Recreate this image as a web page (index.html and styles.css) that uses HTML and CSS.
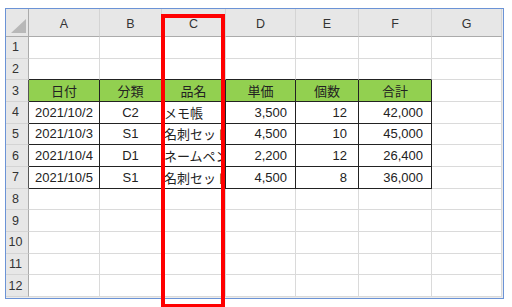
FILE: index.html
```html
<!DOCTYPE html>
<html lang="ja">
<head>
    <meta charset="UTF-8">
    <meta name="viewport" content="width=device-width, initial-scale=1.0">
    <title>売上表</title>
    <link rel="stylesheet" href="styles.css">
</head>
<body>
    <div class="page">
        <div class="sheet" id="sheet"></div>
        <div class="highlight"></div>
    </div>

    <script>
        // Column letters and cell data
        const columns = ['A', 'B', 'C', 'D', 'E', 'F', 'G'];
        const table = [
            ['日付', '分類', '品名', '単価', '個数', '合計'],
            ['2021/10/2', 'C2', 'メモ帳', '3,500', '12', '42,000'],
            ['2021/10/3', 'S1', '名刺セット', '4,500', '10', '45,000'],
            ['2021/10/4', 'D1', 'ネームペン', '2,200', '12', '26,400'],
            ['2021/10/5', 'S1', '名刺セット', '4,500', '8', '36,000']
        ];
        const align = ['center', 'center', 'left', 'num', 'num-e', 'num'];

        function cell(text, className) {
            const div = document.createElement('div');
            div.className = className;
            div.textContent = text;
            return div;
        }

        function renderSheet() {
            const sheet = document.getElementById('sheet');

            // header row
            const corner = cell('', 'col-head corner');
            corner.innerHTML = '<svg width="15" height="14" viewBox="0 0 15 14"><polygon points="0,14 15,14 15,0" fill="#b8b8b8"/></svg>';
            sheet.appendChild(corner);
            columns.forEach(letter => sheet.appendChild(cell(letter, 'col-head')));

            // rows 1 - 12
            for (let r = 1; r <= 12; r++) {
                const inTable = r >= 3 && r <= 7;
                sheet.appendChild(cell(r, 'row-head' + (inTable ? ' edge' : '')));
                columns.forEach((letter, c) => {
                    let cls = 'cell';
                    let text = '';
                    if (inTable && c < 6) {
                        text = table[r - 3][c];
                        cls += ' boxed ' + align[c];
                        if (r === 3) cls = 'cell boxed center title';
                    }
                    if (r === 2 && c < 6) cls += ' above';
                    if (inTable && c === 6) cls += ' after';
                    sheet.appendChild(cell(text, cls));
                });
            }
        }

        renderSheet();
    </script>
</body>
</html>
```

FILE: styles.css
```css
body {
    margin: 0;
    background-color: #ffffff;
    font-family: "Liberation Sans", "Noto Sans CJK JP", sans-serif;
    color: #222;
}

.page {
    position: relative;
    width: 512px;
    height: 307px;
}

/* Excel grid */
.sheet {
    display: grid;
    grid-template-columns: 23px 71px 62px 64px 70px 63px 73px 70px;
    grid-template-rows: 28px repeat(12, 21.667px);
    width: max-content;
    margin: 8px 0 0 5px;
    padding: 0 1px 1px 0;
    border: 1px solid #6b93d6;
    background-color: #ececec;
}

.sheet > div {
    box-sizing: border-box;
    display: flex;
    align-items: center;
    overflow: hidden;
    white-space: nowrap;
    font-size: 13px;
}

.col-head {
    justify-content: center;
    padding-top: 3px;
    background-color: #e7e7e7;
    border-right: 1px solid #d4d4d4;
    border-bottom: 1px solid #ababab;
    color: #333;
    font-size: 12.5px !important;
}

.corner {
    justify-content: flex-end !important;
    align-items: flex-end !important;
    padding: 0 2px 3px 0;
    border-right-color: #ababab;
}

.corner svg {
    display: block;
}

.row-head {
    justify-content: center;
    padding-right: 3px;
    background-color: #e7e7e7;
    border-right: 1px solid #ababab;
    border-bottom: 1px solid #d4d4d4;
    color: #333;
    font-size: 12.5px !important;
}

.row-head.edge {
    border-right-color: #555;
}

.cell {
    background-color: #ffffff;
    border-right: 1px solid #dadada;
    border-bottom: 1px solid #dadada;
}

.cell.above {
    border-bottom-color: #222;
}

.cell.boxed {
    border-right-color: #222;
    border-bottom-color: #222;
}

.cell.title {
    background-color: #92d050;
}

.center {
    justify-content: center;
}

.left {
    justify-content: flex-start;
    padding-left: 2px;
}

.num {
    justify-content: flex-end;
    padding-right: 8px;
}

.num-e {
    justify-content: flex-end;
    padding-right: 11px;
}

/* red frame around column C */
.highlight {
    position: absolute;
    left: 161px;
    top: 6px;
    width: 64px;
    height: 294px;
    box-sizing: border-box;
    border: 4px solid #ff0000;
}
```
